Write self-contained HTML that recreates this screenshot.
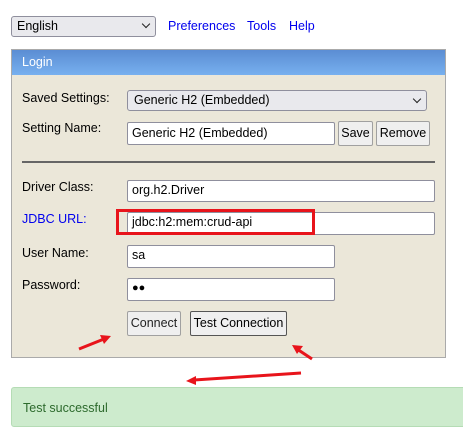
<!DOCTYPE html>
<html><head><style>
*{box-sizing:border-box;margin:0;padding:0}
body{width:463px;height:422px;background:#fff;font-family:"Liberation Sans",Arial,sans-serif;font-size:12.5px;position:relative;overflow:hidden;color:#000}
.a{position:absolute}
.sel{background:#e9e9ed;border:1px solid #8f8f9d;border-radius:3px;padding-left:5px;line-height:18px}
.inp{background:#fff;border:1px solid #8f8f9d;border-radius:2px;padding-left:4px;line-height:19px}
.btn{background:#efefef;border:1px solid #a0a0a0;border-radius:2px;text-align:center;line-height:22px}
.lnk{color:#0000ee}
.chev{position:absolute;right:6px;top:6px;width:6px;height:6px;border-right:1.5px solid #222;border-bottom:1.5px solid #222;transform:rotate(45deg)}
</style></head><body>
<div class="a sel" style="left:11px;top:16px;width:145px;height:21px">English<span class="chev" style="top:4px"></span></div>
<div class="a lnk" style="left:168px;top:19px">Preferences</div>
<div class="a lnk" style="left:247px;top:19px">Tools</div>
<div class="a lnk" style="left:289px;top:19px">Help</div>
<div class="a" style="left:11px;top:49px;width:435px;height:309px;background:#ebe7d9;border:1px solid #aaa"></div>
<div class="a" style="left:12px;top:50px;width:433px;height:25px;background:linear-gradient(#5b8dd3,#77b0ef);color:#fff;padding:5px 0 0 10px">Login</div>
<div class="a" style="left:22px;top:91px">Saved Settings:</div>
<div class="a sel" style="left:127px;top:90px;width:300px;height:21px;padding-left:6px">Generic H2 (Embedded)<span class="chev" style="top:5px"></span></div>
<div class="a" style="left:22px;top:121px">Setting Name:</div>
<div class="a inp" style="left:127px;top:122px;width:208px;height:23px;line-height:21px">Generic H2 (Embedded)</div>
<div class="a btn" style="left:338px;top:121px;width:35px;height:25px">Save</div>
<div class="a btn" style="left:376px;top:121px;width:54px;height:25px">Remove</div>
<div class="a" style="left:22px;top:161px;width:413px;height:2px;background:#666"></div>
<div class="a" style="left:22px;top:180px">Driver Class:</div>
<div class="a inp" style="left:127px;top:180px;width:308px;height:22px">org.h2.Driver</div>
<div class="a lnk" style="left:22px;top:212px">JDBC URL:</div>
<div class="a inp" style="left:127px;top:212px;width:308px;height:23px">jdbc:h2:mem:crud-api</div>
<div class="a" style="left:116px;top:209px;width:199px;height:26px;border:3px solid #e8141b"></div>
<div class="a" style="left:22px;top:246px">User Name:</div>
<div class="a inp" style="left:127px;top:245px;width:208px;height:23px">sa</div>
<div class="a" style="left:22px;top:278px">Password:</div>
<div class="a inp" style="left:127px;top:278px;width:208px;height:23px;font-size:11px">●●</div>
<div class="a btn" style="left:127px;top:311px;width:54px;height:25px;color:#222">Connect</div>
<div class="a btn" style="left:190px;top:311px;width:97px;height:25px;border-color:#555">Test Connection</div>
<svg class="a" style="left:0;top:0" width="463" height="422">
<g stroke="#e8141b" stroke-width="3" fill="#e8141b">
<line x1="79" y1="349" x2="104" y2="339"/><polygon points="111,336 100,335 104,344" stroke="none"/>
<line x1="312" y1="359" x2="297" y2="349"/><polygon points="292,345 303,346 297,354" stroke="none"/>
<line x1="301" y1="373" x2="194" y2="380"/><polygon points="186,381 196,376 196,385" stroke="none"/>
</g></svg>
<div class="a" style="left:11px;top:387px;width:460px;height:40px;background:#cdebcd;border:1px solid #b5dcb5;border-radius:3px;color:#2d6a2d;padding:13px 0 0 11px">Test successful</div>
</body></html>
